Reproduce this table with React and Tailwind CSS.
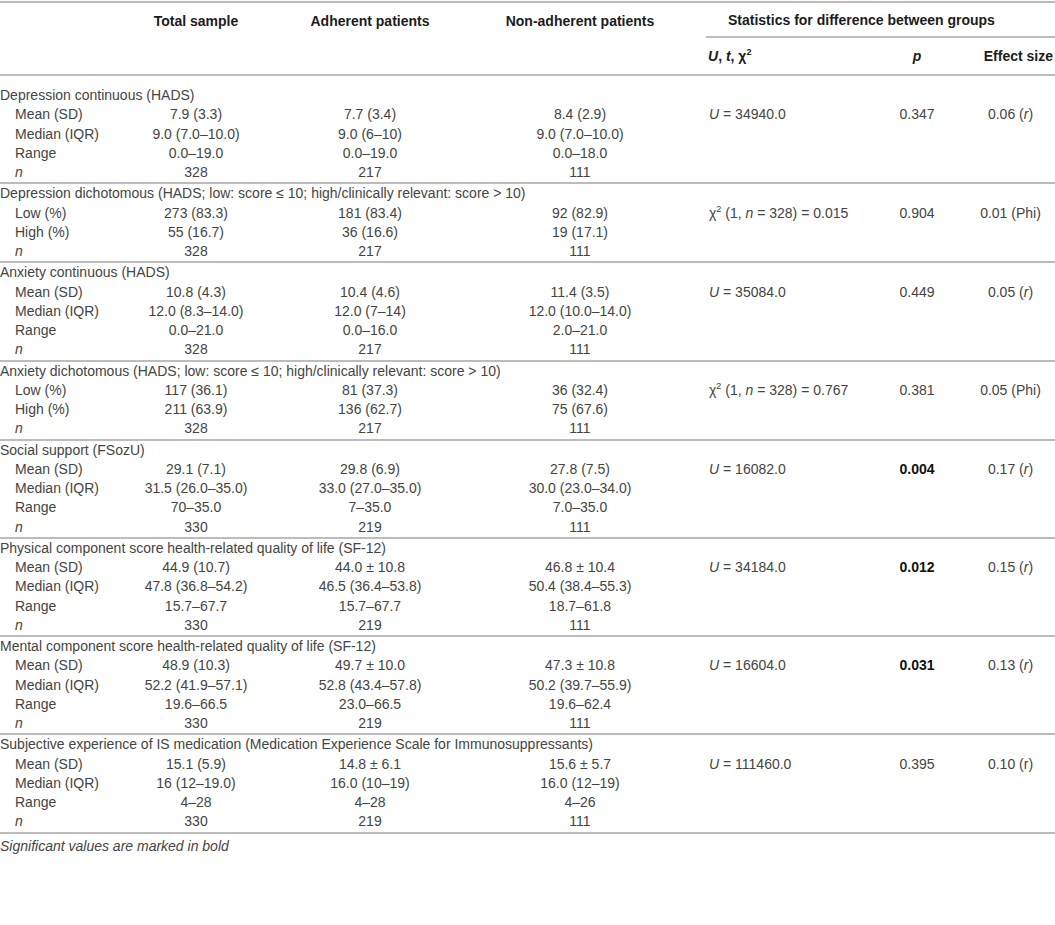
import React from 'react';

const grid = 'grid grid-cols-[140px_112px_236px_218px_154px_114px_81px]';

const Sup2 = () => <sup className="text-[9px] relative -top-[6px]">2</sup>;

const U = (v) => (
    <>
        <i>U</i> = {v}
    </>
);

const Chi = (v) => (
    <>
        χ<Sup2 /> (1, <i>n</i> = 328) = {v}
    </>
);

const R = (v) => (
    <>
        {v} (<i>r</i>)
    </>
);

const sections = [
    {
        title: 'Depression continuous (HADS)',
        rows: [
            ['Mean (SD)', '7.9 (3.3)', '7.7 (3.4)', '8.4 (2.9)'],
            ['Median (IQR)', '9.0 (7.0–10.0)', '9.0 (6–10)', '9.0 (7.0–10.0)'],
            ['Range', '0.0–19.0', '0.0–19.0', '0.0–18.0'],
            ['n', '328', '217', '111'],
        ],
        stat: U('34940.0'),
        p: '0.347',
        eff: R('0.06'),
    },
    {
        title: 'Depression dichotomous (HADS; low: score ≤ 10; high/clinically relevant: score > 10)',
        rows: [
            ['Low (%)', '273 (83.3)', '181 (83.4)', '92 (82.9)'],
            ['High (%)', '55 (16.7)', '36 (16.6)', '19 (17.1)'],
            ['n', '328', '217', '111'],
        ],
        stat: Chi('0.015'),
        p: '0.904',
        eff: '0.01 (Phi)',
    },
    {
        title: 'Anxiety continuous (HADS)',
        rows: [
            ['Mean (SD)', '10.8 (4.3)', '10.4 (4.6)', '11.4 (3.5)'],
            ['Median (IQR)', '12.0 (8.3–14.0)', '12.0 (7–14)', '12.0 (10.0–14.0)'],
            ['Range', '0.0–21.0', '0.0–16.0', '2.0–21.0'],
            ['n', '328', '217', '111'],
        ],
        stat: U('35084.0'),
        p: '0.449',
        eff: R('0.05'),
    },
    {
        title: 'Anxiety dichotomous (HADS; low: score ≤ 10; high/clinically relevant: score > 10)',
        rows: [
            ['Low (%)', '117 (36.1)', '81 (37.3)', '36 (32.4)'],
            ['High (%)', '211 (63.9)', '136 (62.7)', '75 (67.6)'],
            ['n', '328', '217', '111'],
        ],
        stat: Chi('0.767'),
        p: '0.381',
        eff: '0.05 (Phi)',
    },
    {
        title: 'Social support (FSozU)',
        rows: [
            ['Mean (SD)', '29.1 (7.1)', '29.8 (6.9)', '27.8 (7.5)'],
            ['Median (IQR)', '31.5 (26.0–35.0)', '33.0 (27.0–35.0)', '30.0 (23.0–34.0)'],
            ['Range', '70–35.0', '7–35.0', '7.0–35.0'],
            ['n', '330', '219', '111'],
        ],
        stat: U('16082.0'),
        p: '0.004',
        bold: true,
        eff: R('0.17'),
    },
    {
        title: 'Physical component score health-related quality of life (SF-12)',
        rows: [
            ['Mean (SD)', '44.9 (10.7)', '44.0 ± 10.8', '46.8 ± 10.4'],
            ['Median (IQR)', '47.8 (36.8–54.2)', '46.5 (36.4–53.8)', '50.4 (38.4–55.3)'],
            ['Range', '15.7–67.7', '15.7–67.7', '18.7–61.8'],
            ['n', '330', '219', '111'],
        ],
        stat: U('34184.0'),
        p: '0.012',
        bold: true,
        eff: R('0.15'),
    },
    {
        title: 'Mental component score health-related quality of life (SF-12)',
        rows: [
            ['Mean (SD)', '48.9 (10.3)', '49.7 ± 10.0', '47.3 ± 10.8'],
            ['Median (IQR)', '52.2 (41.9–57.1)', '52.8 (43.4–57.8)', '50.2 (39.7–55.9)'],
            ['Range', '19.6–66.5', '23.0–66.5', '19.6–62.4'],
            ['n', '330', '219', '111'],
        ],
        stat: U('16604.0'),
        p: '0.031',
        bold: true,
        eff: R('0.13'),
    },
    {
        title: 'Subjective experience of IS medication (Medication Experience Scale for Immunosuppressants)',
        rows: [
            ['Mean (SD)', '15.1 (5.9)', '14.8 ± 6.1', '15.6 ± 5.7'],
            ['Median (IQR)', '16 (12–19.0)', '16.0 (10–19)', '16.0 (12–19)'],
            ['Range', '4–28', '4–28', '4–26'],
            ['n', '330', '219', '111'],
        ],
        stat: U('111460.0'),
        p: '0.395',
        eff: '0.10 (r)',
    },
];

function Section({ s, first }) {
    return (
        <div className={`border-b-2 border-[#bcbcbc] ${first ? 'pt-[10px]' : ''}`}>
            <div className={grid}>
                <div className="col-span-7 whitespace-nowrap">{s.title}</div>
                {s.rows.map((r, i) => (
                    <React.Fragment key={i}>
                        <div className="pl-[15px] whitespace-nowrap">
                            {r[0] === 'n' ? <i>n</i> : r[0]}
                        </div>
                        <div className="text-center whitespace-nowrap">{r[1]}</div>
                        <div className="text-center whitespace-nowrap">{r[2]}</div>
                        <div className="text-center pr-[34px] whitespace-nowrap">{r[3]}</div>
                        <div className="pl-[3px] whitespace-nowrap">{i === 0 ? s.stat : ''}</div>
                        <div className={`text-center whitespace-nowrap ${s.bold ? 'font-bold text-[#111]' : ''}`}>
                            {i === 0 ? s.p : ''}
                        </div>
                        <div className="text-center pr-[8px] whitespace-nowrap">{i === 0 ? s.eff : ''}</div>
                    </React.Fragment>
                ))}
            </div>
        </div>
    );
}

export default function App() {
    return (
        <div className="w-[1055px] bg-white text-[14px] leading-[19.25px] text-[#444] font-['Liberation_Sans',Arial,sans-serif]">
            {/* header */}
            <div className="mt-px border-t-2 border-b-2 border-[#bcbcbc] flex font-bold text-[#1c1c1c]">
                <div className="flex w-[706px] pt-[9px]">
                    <div className="w-[140px]" />
                    <div className="w-[112px] text-center whitespace-nowrap">Total sample</div>
                    <div className="w-[236px] text-center whitespace-nowrap">Adherent patients</div>
                    <div className="w-[218px] text-center pr-[34px] whitespace-nowrap">Non-adherent patients</div>
                </div>
                <div className="w-[349px] flex flex-col">
                    <div className="h-[35px] pt-[8px] pl-[22px] border-b-2 border-[#bcbcbc] whitespace-nowrap">
                        Statistics for difference between groups
                    </div>
                    <div className="h-[36px] flex items-center pt-[2px]">
                        <div className="w-[154px] pl-[2px]">
                            <i>U</i>, <i>t</i>, χ<Sup2 />
                        </div>
                        <div className="w-[114px] text-center">
                            <i>p</i>
                        </div>
                        <div className="w-[81px] text-right pr-[2px] whitespace-nowrap">Effect size</div>
                    </div>
                </div>
            </div>

            {sections.map((s, i) => (
                <Section key={i} s={s} first={i === 0} />
            ))}

            <div className="pt-[3px] italic">Significant values are marked in bold</div>
        </div>
    );
}
